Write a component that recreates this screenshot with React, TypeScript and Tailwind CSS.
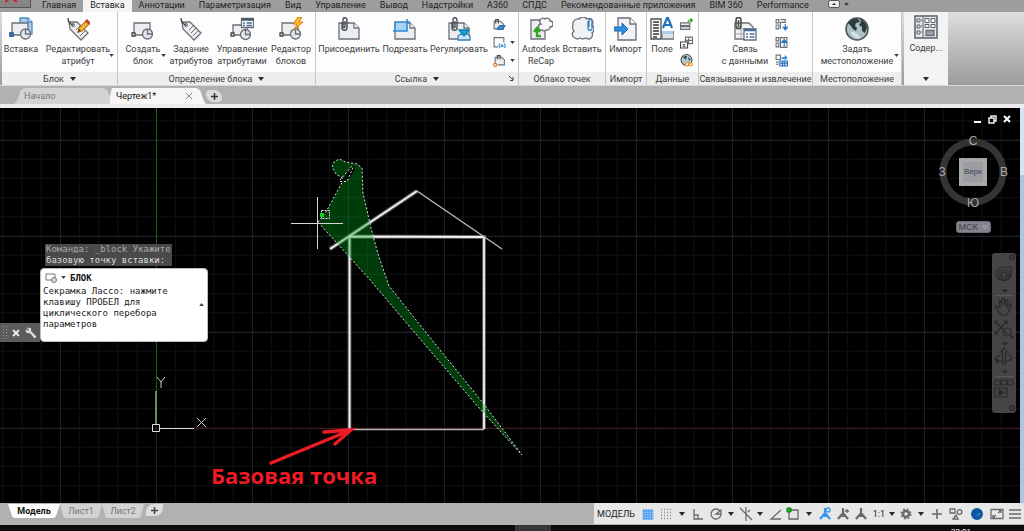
import React, { ReactNode } from 'react';

/* ---------- ribbon icons ---------- */

const Svg = ({ size = 24, children }: { size?: number; children: ReactNode }) => (
  <svg width={size} height={size} viewBox="0 0 24 24" fill="none" stroke="#6b7078" strokeWidth="1.3" aria-hidden="true">
    {children}
  </svg>
);

const BlockShape = () => (
  <>
    <path d="M3 6h16v12H3z" fill="#eceef1" />
    <circle cx="16.500" cy="17" r="5" fill="#e3e6ea" />
    <path d="M16.500 12v5h5" />
    <path d="M1 16h3v3H1z" fill="#fff" stroke="#444" />
  </>
);

const TagShape = () => (
  <>
    <path d="M3 5l8 0L22 16l-7 7L4 12z" fill="#eceef1" />
    <path d="M10 13l4-4M12 16l5-5M14 19l5-5" strokeWidth="1" />
    <circle cx="7" cy="8" r="1.300" fill="#fff" />
    <path d="M7 8C4 7 2 5 2 1" stroke="#444" />
  </>
);

const PageShape = () => (
  <>
    <path d="M2 6h15l5 5v11H2z" fill="#eceef1" />
    <path d="M17 6v5h5" fill="#fff" />
  </>
);

const ClipShape = () => (
  <path d="M5 5v6c0 3 5 3 5 0V3c0-3-4-3-4 0v7c0 1 2 1 2 0V4" stroke="#4b4f55" strokeWidth="1.400" />
);

const InsertIcon = () => (
  <Svg>
    <path d="M11 1h8l4 4v12H11z" fill="#a9cdf0" stroke="#4e8ac4" />
    <path d="M19 1v4h4" fill="#dcebf8" stroke="#4e8ac4" />
    <BlockShape />
    <path d="M1 16h3v3H1z" fill="#3b7cc4" stroke="#2b67a8" />
  </Svg>
);

const EditAttrIcon = () => (
  <Svg>
    <TagShape />
    <path d="M12 15l1-4 7-7 3 3-7 7z" fill="#f5b83d" stroke="#c97d16" />
    <path d="M20 4l3 3 1-1-3-3z" fill="#e8553a" stroke="#c9402a" />
    <path d="M12 15l1-3 2 2z" fill="#333" stroke="none" />
  </Svg>
);

const CreateBlockIcon = () => <Svg><BlockShape /></Svg>;
const TagIcon = () => <Svg><TagShape /></Svg>;

const ManageAttrIcon = () => (
  <Svg>
    <path d="M3 8h14v10H3z" fill="#eceef1" />
    <circle cx="15.500" cy="17.500" r="5" fill="#e3e6ea" />
    <path d="M15.500 12.500v5h5" />
    <path d="M1 16h3v3H1z" fill="#fff" stroke="#444" />
    <path d="M11.500 1.500h12v9h-12z" fill="#fff" />
    <path d="M11.500 2.500h12" stroke="#44566b" strokeWidth="2.500" />
    <path d="M13 6h2M13 8.500h2M16.500 6h5.500M16.500 8.500h5.500" stroke="#4a6c96" />
  </Svg>
);

const BlockEditorIcon = () => (
  <Svg>
    <BlockShape />
    <path d="M19 0l-5 7h4l-3 6 9-8h-4l3-5z" fill="#fbc02d" stroke="#e8731a" strokeWidth="1" />
  </Svg>
);

const AttachIcon = () => <Svg><PageShape /><ClipShape /></Svg>;

const ClipIcon = () => (
  <Svg>
    <PageShape />
    <path d="M2 5h12v9H2z" fill="#a9d3f3" stroke="none" />
    <path d="M0 14h14V2M2 14V5h15" stroke="#2e86d6" strokeWidth="1.500" />
  </Svg>
);

const AdjustIcon = () => (
  <Svg>
    <PageShape />
    <ClipShape />
    <path d="M11 19l3-2h6l3 2v4H11z" fill="#cfe3f5" stroke="#3d7fb8" />
    <path d="M12 13h10l-5 6z" fill="#11a7dd" stroke="#0a7fb0" />
  </Svg>
);

const RecapIcon = () => (
  <Svg>
    <path d="M2 3h14v19H2z" fill="#eceef1" />
    <path d="M13 13a3 3 0 0 1-1-6 3 3 0 0 1 4-5 3 3 0 0 1 5 2 3 3 0 0 1 0 6 3 3 0 0 1-4 3 3 3 0 0 1-4 0z" fill="#f6f7f8" />
    <path d="M12 19H8v-6M5 15l3-4 3 4" stroke="#35a51d" strokeWidth="2.400" />
  </Svg>
);

const CloudClipIcon = () => (
  <Svg>
    <path d="M5 21a4 4 0 0 1-1-7 6 6 0 0 1-1-6 5 5 0 0 1 6-6 5 5 0 0 1 8 0 4 4 0 0 1 5 6 5 5 0 0 1 0 8 4 4 0 0 1-6 5 6 6 0 0 1-6 0 4 4 0 0 1-5 0z" fill="#f1f2f4" />
    <path d="M18 4v7c0 3 4 3 4 0V4c0-3-3-3-3 0v6" stroke="#3d7fb8" />
  </Svg>
);

const ImportIcon = () => (
  <Svg>
    <path d="M4 1h12l6 6v16H4z" fill="#f1f2f4" />
    <path d="M16 1v6h6" fill="#fff" />
    <path d="M0 10h8V6l6 6-6 6v-4H0z" fill="#2f8fe0" stroke="#1c69b0" strokeWidth="1" />
  </Svg>
);

const FieldIcon = () => (
  <Svg>
    <path d="M1 2h10v20H1z" fill="#fff" stroke="#4b4f55" />
    <path d="M3 5h6M3 8h6M3 11h6M3 14h6M3 17h6M3 20h4" stroke="#333" strokeWidth="1.500" />
    <path d="M12 15h12v7H12z" fill="#dfe2e6" />
    <path d="M12 14h11v3H12z" fill="#a9cdf0" stroke="none" />
    <path d="M13 11l4-10h1l4 10M14.500 8h6" stroke="#2372bd" strokeWidth="2.200" />
  </Svg>
);

const LinkDataIcon = () => (
  <Svg>
    <path d="M2 6h14l4 4v12H2z" fill="#f1f2f4" />
    <path d="M2 12h16M2 17h16M8 8v14" stroke="#a5a9ae" strokeWidth="1" />
    <path d="M3 3a2.500 2.500 0 0 1 5 0v6a2.500 2.500 0 0 1-5 0zM5.500 3v7" stroke="#444" strokeWidth="1.500" />
    <path d="M11 12h12v11H11z" fill="#fff" />
    <path d="M11 13h12" stroke="#4a6c96" strokeWidth="2.500" />
    <path d="M13 17h2M13 20h2M16.500 17h5M16.500 20h5" stroke="#4a6c96" />
  </Svg>
);

const GlobeIcon = () => (
  <Svg>
    <circle cx="12" cy="12" r="11" fill="#a9c0c6" stroke="#4a5357" strokeWidth="1.500" />
    <path d="M3 6c3-4 7-5 10-4l2 3-4 1-1 3 2 2-1 3-3-2-3-4zM15 2c4 2 7 5 7 9l-2 5-3-2 0-4-3-2 2-3z" fill="#2f393c" stroke="none" />
    <path d="M6 15c3-1 8 2 9 6-4 1-8-1-9-6z" fill="#d4e2e4" stroke="none" />
  </Svg>
);

const ContentIcon = () => (
  <Svg>
    <path d="M1 1h22v22H1z" fill="#e7e8ea" stroke="#5b6066" strokeWidth="1.500" />
    <path d="M9 1v22M3 4h3v3H3zM3 10h3v3H3zM3 16h3v3H3zM7 5h1M7 11h1M7 17h1" stroke="#5b6066" strokeWidth="1" />
    <path d="M11 3.500h4v4h-4zM17 3.500h4v4h-4zM11 9.500h4v3h-4zM17 9.500h4v3h-4z" stroke="#5b6066" fill="#fff" strokeWidth="1" />
    <path d="M12 15.500h8v5h-8z" fill="#9aa0a8" />
  </Svg>
);

/* ---------- small ribbon icons ---------- */

const LayersPageIcon = () => (
  <Svg size={13}>
    <path d="M2 6h12l5 5v9H2z" fill="#eceef1" strokeWidth="2" />
    <path d="M5 10V3h5v7" stroke="#444" strokeWidth="2" />
    <path d="M8 19l5-5h9l-4 7h-9z" fill="#3d93dc" stroke="#2468a8" strokeWidth="2" />
  </Svg>
);
const FrameVarIcon = () => (
  <Svg size={13}>
    <path d="M9 20H2V3h18v9" strokeWidth="2" />
    <path d="M13 14q-3 4 0 8M21 14q3 4 0 8M15 16l4 4M19 16l-4 4" stroke="#2e86d6" strokeWidth="2" />
  </Svg>
);
const SnapPageIcon = () => (
  <Svg size={13}>
    <path d="M4 19V6h12l5 5v9H9" fill="#eceef1" strokeWidth="2" />
    <path d="M8 10V3h5v7" stroke="#444" strokeWidth="2" />
    <circle cx="4" cy="20" r="3" stroke="#e8731a" strokeWidth="2" />
  </Svg>
);
const UpdateFieldIcon = () => (
  <Svg size={13}>
    <path d="M1 9h17v5H1zM1 16h17v5H1z" fill="#eceef1" strokeWidth="2" />
    <path d="M15 8c0-4 3-5 7-4M19 1l4 3-4 4" stroke="#35a51d" strokeWidth="2.500" />
  </Svg>
);
const TableLinkIcon = () => (
  <Svg size={13}>
    <path d="M10 2h13v12H10zM10 8h13M16 2v12" strokeWidth="2" />
    <path d="M1 11h13v11H1zM5 16h5M5 19h5" fill="#fff" stroke="#444" strokeWidth="2" />
  </Svg>
);
const HyperlinkIcon = () => (
  <Svg size={13}>
    <circle cx="12" cy="11" r="10" fill="#b7c9cf" stroke="#4a5357" strokeWidth="2" />
    <path d="M5 5l8-2-2 8zM15 5l5 6-4 1z" fill="#37474f" stroke="none" />
    <path d="M10 19a3 3 0 0 1 6 0 3 3 0 0 1-6 0zM17 19a3 3 0 0 1 6 0 3 3 0 0 1-6 0z" fill="#fff" stroke="#e8911a" strokeWidth="2" />
  </Svg>
);
const DownloadIcon = () => (
  <Svg size={13}>
    <path d="M2 3h5v6H2zM2 13h5v7H2zM10 3h9v6M10 20V8h8" strokeWidth="2" />
    <path d="M19 11v9M15 17l4 5 4-5z" fill="#2e86d6" stroke="#2372bd" strokeWidth="2" />
  </Svg>
);
const UploadIcon = () => (
  <Svg size={13}>
    <path d="M2 3h5v6H2zM2 13h5v7H2zM10 3h12v18H10z" strokeWidth="2" />
    <path d="M17 20v-9M12 12l5-6 5 6z" fill="#2e86d6" stroke="#2372bd" strokeWidth="2" />
  </Svg>
);
const ExtractIcon = () => (
  <Svg size={13}>
    <path d="M2 2h8v8H2zM2 15h5M2 19h5" strokeWidth="2" />
    <path d="M12 6h6V2l5 5-5 5V9h-6z" fill="#2e86d6" stroke="none" />
    <path d="M9 13h14v9H9zM9 17h14M14 13v9M18 13v9" fill="#d6e8f8" stroke="#2372bd" strokeWidth="2" />
  </Svg>
);

const Caret = () => (
  <svg className="shrink-0" width="5" height="3" viewBox="0 0 6 4" fill="#3a3a3a" aria-hidden="true"><path d="M0 0h6L3 4z" /></svg>
);

const WideCaret = () => (
  <svg className="shrink-0" width="6" height="4" viewBox="0 0 6 4" fill="#2a2a2a" aria-hidden="true"><path d="M0 0h6L3 4z" /></svg>
);

/* ---------- ribbon ---------- */

type BigButtonProps = { icon: ReactNode; lines: string[]; width: string; arrow?: boolean };

const BigButton = ({ icon, lines, width, arrow }: BigButtonProps) => (
  <button type="button" className={`relative flex shrink-0 flex-col items-center whitespace-nowrap pt-[5px] ${width}`}>
    {icon}
    <span className="mt-0.5 leading-3">
      {lines.map((line) => <span key={line} className="block">{line}</span>)}
    </span>
    {arrow && <span className="absolute right-0.5 top-[42px] flex"><Caret /></span>}
  </button>
);

const SmallButton = ({ label, arrow, children }: { label: string; arrow?: boolean; children: ReactNode }) => (
  <button type="button" aria-label={label} className="flex items-center gap-1">
    {children}
    {arrow && <Caret />}
  </button>
);

const SmallColumn = ({ children }: { children: ReactNode }) => (
  <div className="flex flex-col gap-[5px] pt-1.5 pl-[3px]">{children}</div>
);

type PanelProps = { title: string; width: string; menu?: boolean; launcher?: boolean; children: ReactNode };

const Panel = ({ title, width, menu, launcher, children }: PanelProps) => (
  <section className={`flex shrink-0 flex-col border-r border-[#c6c6c6] bg-[#fdfdfd] ${width}`}>
    <div className="flex flex-1">{children}</div>
    <h2 className="relative flex h-[13px] items-center justify-center gap-1.5 whitespace-nowrap bg-[#eeeeee]">
      {title}
      {menu && <WideCaret />}
      {launcher && (
        <svg className="absolute right-1 top-1" width="5" height="5" viewBox="0 0 5 5" stroke="#444" fill="none" aria-hidden="true">
          <path d="M0 0l4 4M4 1v3.500H1" />
        </svg>
      )}
    </h2>
  </section>
);

const ribbonTabs = [
  'Главная', 'Вставка', 'Аннотации', 'Параметризация', 'Вид', 'Управление', 'Вывод',
  'Надстройки', 'A360', 'СПДС', 'Рекомендованные приложения', 'BIM 360', 'Performance',
];

const RibbonTabs = () => (
  <nav className="flex h-3 bg-[#9d9d9d] text-[#222]">
    <button type="button" aria-label="Меню приложения" className="mr-1 flex h-2 w-[31px] shrink-0 border-b border-r border-[#555] bg-[#858585]">
      <svg className="ml-[5px]" width="20" height="4" viewBox="0 0 20 4" stroke="#c8232c" strokeWidth="2" fill="none" aria-hidden="true">
        <path d="M0 2l3-2M9 0l3 2" />
      </svg>
    </button>
    {ribbonTabs.map((tab) => (
      <button
        key={tab}
        type="button"
        className={`h-3 shrink-0 whitespace-nowrap px-[7px] pb-px leading-[11px] ${tab === 'Вставка' ? 'bg-[#f4f4f4]' : ''}`}
      >
        {tab}
      </button>
    ))}
    <button type="button" aria-label="Свернуть ленту" className="ml-3 flex items-center gap-1 pb-1">
      <svg width="12" height="8" viewBox="0 0 12 8" aria-hidden="true">
        <rect x=".5" y=".5" width="11" height="7" rx="2" fill="#eee" stroke="#555" />
        <path d="M4 5h4L6 3z" fill="#222" />
      </svg>
      <Caret />
    </button>
  </nav>
);

const Ribbon = () => (
  <div className="flex h-[74px] overflow-hidden border-b border-[#d8d8d8] bg-linear-to-b from-[#dedede] to-[#9c9c9c] pl-0.5 text-[#404040]">
    <Panel title="Блок" width="w-[116px]" menu>
      <BigButton icon={<InsertIcon />} lines={['Вставка']} width="w-[38px]" />
      <BigButton icon={<EditAttrIcon />} lines={['Редактировать', 'атрибут']} width="w-[76px]" arrow />
    </Panel>
    <Panel title="Определение блока" width="w-[198px]" menu>
      <BigButton icon={<CreateBlockIcon />} lines={['Создать', 'блок']} width="w-[50px]" arrow />
      <BigButton icon={<TagIcon />} lines={['Задание', 'атрибутов']} width="w-[46px]" />
      <BigButton icon={<ManageAttrIcon />} lines={['Управление', 'атрибутами']} width="w-[56px]" />
      <BigButton icon={<BlockEditorIcon />} lines={['Редактор', 'блоков']} width="w-[42px]" />
    </Panel>
    <Panel title="Ссылка" width="w-[203px]" menu launcher>
      <BigButton icon={<AttachIcon />} lines={['Присоединить']} width="w-[66px]" />
      <BigButton icon={<ClipIcon />} lines={['Подрезать']} width="w-[46px]" />
      <BigButton icon={<AdjustIcon />} lines={['Регулировать']} width="w-[62px]" />
      <SmallColumn>
        <SmallButton label="Слои подложки"><LayersPageIcon /></SmallButton>
        <SmallButton label="Контуры" arrow><FrameVarIcon /></SmallButton>
        <SmallButton label="Привязка к подложкам" arrow><SnapPageIcon /></SmallButton>
      </SmallColumn>
    </Panel>
    <Panel title="Облако точек" width="w-[87px]">
      <BigButton icon={<RecapIcon />} lines={['Autodesk', 'ReCap']} width="w-[44px]" />
      <BigButton icon={<CloudClipIcon />} lines={['Вставить']} width="w-[38px]" />
    </Panel>
    <Panel title="Импорт" width="w-[41px]">
      <BigButton icon={<ImportIcon />} lines={['Импорт']} width="w-[39px]" />
    </Panel>
    <Panel title="Данные" width="w-[52px]">
      <BigButton icon={<FieldIcon />} lines={['Поле']} width="w-[30px]" />
      <SmallColumn>
        <SmallButton label="Обновить поля"><UpdateFieldIcon /></SmallButton>
        <SmallButton label="Объект OLE"><TableLinkIcon /></SmallButton>
        <SmallButton label="Гиперссылка"><HyperlinkIcon /></SmallButton>
      </SmallColumn>
    </Panel>
    <Panel title="Связывание и извлечение" width="w-[114px]">
      <BigButton icon={<LinkDataIcon />} lines={['Связь', 'с данными']} width="w-[54px] ml-[19px]" />
      <SmallColumn>
        <SmallButton label="Загрузить из источника"><DownloadIcon /></SmallButton>
        <SmallButton label="Выгрузить в источник"><UploadIcon /></SmallButton>
        <SmallButton label="Извлечение данных"><ExtractIcon /></SmallButton>
      </SmallColumn>
    </Panel>
    <Panel title="Местоположение" width="w-[89px]">
      <BigButton icon={<GlobeIcon />} lines={['Задать', 'местоположение']} width="w-[88px]" arrow />
    </Panel>
    <button type="button" className="ml-0.5 flex w-[44px] shrink-0 flex-col items-center bg-[#f3f3f3] pt-[3px]">
      <ContentIcon />
      <span className="leading-[18px]">Содер...</span>
      <span className="mt-auto mb-1 flex"><WideCaret /></span>
    </button>
  </div>
);

const DocumentTabs = () => (
  <div className="flex h-[22px] items-end border-b-4 border-[#ededed] bg-[#b1b1b1] pl-3.5">
    <button type="button" className="h-4 w-24 bg-[#d3d3d3] pl-2.5 text-left text-[#777] [clip-path:polygon(0_100%,3%_80%,7%_15%,11%_0,93%_0,97%_12%,100%_50%,100%_100%)]">
      Начало
    </button>
    <button type="button" className="flex h-4 w-[96px] items-center bg-[#f6f6f6] pl-1.5 text-left text-[#111] [clip-path:polygon(0_50%,2%_0,90%_0,94%_15%,98%_85%,100%_100%,0_100%)]">
      Чертеж1*
      <svg className="ml-auto mr-3.5" width="6" height="6" viewBox="0 0 6 6" stroke="#888" aria-hidden="true"><path d="M0 0l6 6M6 0L0 6" /></svg>
    </button>
    <button type="button" aria-label="Новый чертеж" className="mb-0.5 flex h-3 w-4 items-center justify-center rounded-tr-lg rounded-bl-lg rounded-tl-sm rounded-br-sm bg-[#dcdcdc]">
      <svg width="7" height="7" viewBox="0 0 7 7" stroke="#333" strokeWidth="1.500" aria-hidden="true"><path d="M3.500 0v7M0 3.500h7" /></svg>
    </button>
  </div>
);

/* ---------- drawing area ---------- */

const lasso = 'M318 222L326 212L344 179L336 174L332 167L334 162L339 159L346 162L357 164L362 168L363 193L371 228L378 254L389 286L432 340L483 403L522 455L480 409L403 319L371 281Z';

const Drawing = () => (
  <svg className="absolute inset-0 h-full w-full" role="img" aria-label="Чертеж домика">
    <defs>
      <pattern id="minor" x="156" y="319.500" width="19.200" height="19.200" patternUnits="userSpaceOnUse">
        <path d="M.5 0v19.200M0 .5h19.200" stroke="#0f1114" fill="none" />
      </pattern>
      <pattern id="major" x="156" y="320" width="96" height="96" patternUnits="userSpaceOnUse">
        <path d="M.5 0v96M0 .5h96" stroke="#1c1e29" fill="none" />
      </pattern>
    </defs>
    <rect width="100%" height="100%" fill="url(#minor)" />
    <rect width="100%" height="100%" fill="url(#major)" />
    <path d="M156.500 0v284" stroke="#1a5e1d" />
    <path d="M194 320.500H1020" stroke="#4a1618" />

    {/* model coordinates start at the top of the window */}
    <g transform="translate(0 -108)" fill="none">
      <g stroke="#555" strokeWidth="4">
        <path d="M349.500 429V236.500L484 237V429M330 249l87-58" />
      </g>
      <g stroke="#f4f4f4" strokeWidth="1.800">
        <path d="M349.500 429V236.500L484 237V429M330 249l87-58" />
      </g>
      <path d="M417 191l85 58M349 429.500h135" stroke="#b5b5b5" strokeWidth="1.500" />
      <path d={lasso} fill="#00a51c" fillOpacity=".36" stroke="#ddd" strokeDasharray="2 2" />
      <path d="M342 181l5 0 6-8 2-7-4 1z" fill="#000" />
      <path d="M340 180l12-14M340 181.500h7l6-14" stroke="#ddd" strokeDasharray="2 2" />
      <path d="M317.500 197v52M291 223.500h52" stroke="#d6d6d6" />
      <path d="M321.500 210.500h8v8h-8z" stroke="#ddd" strokeDasharray="2 1" />
      <path d="M320 213h4v4h-4z" fill="#00d618" />

      {/* UCS icon */}
      <path d="M156 391v34" stroke="#86b986" strokeWidth="1.500" />
      <path d="M160 428.500h34M152.500 424.500h7v7h-7z" stroke="#ddd" />
      <path d="M157 377l4 5 4-5M161 382v6M197 418l9 9M206 418l-9 9" stroke="#ccc" />

      <g stroke="#ed1c24" strokeWidth="3.500" strokeLinecap="round">
        <path d="M271 463l80-33M324 432l27-2-16 14" />
      </g>
    </g>
  </svg>
);

const WindowControls = () => (
  <div className="absolute right-2 top-[7px] flex gap-1.5 text-white">
    <button type="button" aria-label="Свернуть"><svg width="9" height="9" viewBox="0 0 9 9" fill="#fff"><path d="M1 6h7v2H1z" /></svg></button>
    <button type="button" aria-label="Развернуть"><svg width="9" height="9" viewBox="0 0 9 9" fill="none" stroke="#eee" strokeWidth="1.500"><path d="M1 3h5v5H1zM3 3V1h5v5H6" /></svg></button>
    <button type="button" aria-label="Закрыть"><svg width="9" height="9" viewBox="0 0 9 9" stroke="#fff" strokeWidth="2"><path d="M1 1l6 6M7 1L1 7" /></svg></button>
  </div>
);

const ViewCube = () => (
  <div className="absolute right-[9px] top-[25px] flex w-[76px] flex-col items-center font-['Liberation_Sans',sans-serif] text-[#aaa]">
    <div className="relative h-[78px] w-full">
      <svg className="absolute inset-0" width="76" height="78" viewBox="0 0 76 78" fill="none" aria-hidden="true">
        <circle cx="38" cy="39" r="30" stroke="#343434" strokeWidth="7" />
      </svg>
      <div className="relative grid h-full grid-cols-[14px_1fr_14px] grid-rows-[16px_1fr_16px] place-items-center text-[12px] leading-none">
        <span className="col-start-2">С</span>
        <span className="col-start-1 row-start-2">З</span>
        <button type="button" className="col-start-2 row-start-2 h-7 w-7 border-4 border-[#a8a8a8] bg-[#9a9da1] text-[8px] text-[#3c4250]">
          Верх
        </button>
        <span className="col-start-3 row-start-2">В</span>
        <span className="col-start-2 row-start-3">Ю</span>
      </div>
    </div>
    <button type="button" className="mt-2.5 flex h-3 w-[35px] items-center justify-between rounded-[3px] border border-[#6c6c78] bg-[#84848f] px-0.5 text-[9px] leading-none text-[#3e3e48]">
      МСК
      <svg width="6" height="4" viewBox="0 0 6 4" fill="none" stroke="#aaa"><path d="M0 0h6L3 4z" /></svg>
    </button>
  </div>
);

const NavigationBar = () => (
  <div className="absolute right-1 top-[145px] w-6 rounded-[3px] bg-[#454545]">
    <svg width="24" height="160" viewBox="0 0 24 160" fill="none" stroke="#2a2a2a" strokeWidth="1.200" role="img" aria-label="Панель навигации">
      <circle cx="20" cy="4" r="2.500" /><path d="M19 4h2" />
      <path d="M4 22a8 8 0 0 1 8-8h7v8a8 8 0 0 1-15 0z" /><circle cx="12" cy="22" r="5.500" /><circle cx="12" cy="22" r="3" />
      <path d="M11 37h4l-2 2z" fill="#2a2a2a" />
      <path d="M3 42.500h18M3 123.500h18" stroke="#585858" />
      <path d="M8 60l-5-6c0-2 2-2 3 0l2 1-1-7c1-1 2 0 3 5V46c1-1 2-1 2 0l1 7 1-6c1-1 2 0 2 1l-1 7 3-4c1-1 2 0 1 2l-3 7c-1 3-5 4-8 0z" />
      <path d="M3 68l12 13M15 68L3 81M3 71v-3h3M12 68h3v3M3 78v3h3" /><circle cx="15" cy="79" r="4" /><path d="M18 82l3 3" strokeWidth="2" />
      <path d="M11 90h4l-2 2zM11 118h4l-2 2z" fill="#2a2a2a" />
      <path d="M10.500 111v-12H9l3-4 3 4h-1.500v12zM9 102c-7 2-7 5-3 6 5 1 13 0 14-3 0-2-3-3-5-3M4 105l3 3-4 2" />
      <path d="M3 127h5v5H3zM9.500 127h5v5h-5zM16 127h5v5h-5zM3 135h12v9H3z" /><path d="M7 137v5l5-2.500z" fill="#2a2a2a" />
      <circle cx="20" cy="155" r="2.500" /><path d="M19 155h2" />
    </svg>
  </div>
);

const CommandLine = () => (
  <div className="absolute left-0 top-[136px] font-['DejaVu_Sans_Mono',monospace] text-[9px]">
    <p className="ml-[45px] w-[127px] whitespace-nowrap bg-[#4a4a4a] px-px leading-[11px] text-[#ddd]">
      <span className="text-[#a8a8a8]">Команда: _block Укажите</span><br />
      базовую точку вставки:
    </p>
    <div className="mt-0.5 flex items-end">
      <div className="flex h-[19px] w-10 items-center justify-around bg-[#5c5c5c]">
        <svg width="4" height="14" viewBox="0 0 4 14" fill="#999" aria-hidden="true">
          <path d="M0 0h1v1H0zM3 0h1v1H3zM0 3h1v1H0zM3 3h1v1H3zM0 6h1v1H0zM3 6h1v1H3zM0 9h1v1H0zM3 9h1v1H3zM0 12h1v1H0zM3 12h1v1H3z" />
        </svg>
        <button type="button" aria-label="Закрыть"><svg width="8" height="8" viewBox="0 0 8 8" stroke="#eee" strokeWidth="1.800"><path d="M1 1l6 6M7 1L1 7" /></svg></button>
        <button type="button" aria-label="Настройка">
          <svg width="12" height="12" viewBox="0 0 12 12" fill="#ddd"><path d="M1 2l2 2 1-1-2-2c3-1 5 0 4 3l5 5c1 1-1 3-2 2L5 6C2 7 0 5 1 2z" /></svg>
        </button>
      </div>
      <div className="relative min-h-[74px] w-[168px] rounded-sm border border-[#bbb] bg-white px-0.5 pt-0.5 text-[#222]">
        <div className="flex h-[13px] items-center gap-1 pl-0.5">
          <svg width="12" height="10" viewBox="0 0 12 10" fill="none" stroke="#777" aria-hidden="true"><path d="M1 1h9v6H1z" /><circle cx="9" cy="7" r="2.500" fill="#ddd" /></svg>
          <Caret />
          <b className="text-[#111]">БЛОК</b>
        </div>
        <p className="mt-0.5 w-32 leading-[11px]">Секрамка Лассо: нажмите клавишу ПРОБЕЛ для циклического перебора параметров</p>
        <button type="button" aria-label="История команд" className="absolute right-[3px] top-[34px] flex rotate-180"><Caret /></button>
      </div>
    </div>
  </div>
);

/* ---------- status bar ---------- */

const StatusSvg = ({ children, color = '#6a6a6a' }: { children: ReactNode; color?: string }) => (
  <svg width="14" height="14" viewBox="0 0 14 14" fill="none" stroke={color} strokeWidth="1.300" aria-hidden="true">{children}</svg>
);

const person = <path d="M7 3v4M7 6l-5 6M7 6l5 6M4 9h6M7 1v3" strokeWidth="2.200" />;

const statusItems: { label: string; width: string; icon: ReactNode }[] = [
  { label: 'Сетка', width: 'w-[19px]', icon: <StatusSvg color="#4b9ef0"><path d="M3 2v11M5.500 2v11M8 2v11M10.500 2v11M1.500 4h11M1.500 6.500h11M1.500 9h11M1.500 11.500h11" /></StatusSvg> },
  { label: 'Шаговая привязка', width: 'w-[18px]', icon: <StatusSvg color="#8a8a8a"><path d="M2 2.500h11M2 5.500h11M2 8.500h11M2 11.500h11" strokeDasharray="1 2" /></StatusSvg> },
  { label: 'Параметры привязки', width: 'w-[13px]', icon: <WideCaret /> },
  { label: 'Орто', width: 'w-5', icon: <StatusSvg><path d="M3 2v10h9M3 8h4v4" /></StatusSvg> },
  { label: 'Полярное отслеживание', width: 'w-4', icon: <StatusSvg><path d="M11 4a5 5 0 1 0 1 3H7l5-4v4" /></StatusSvg> },
  { label: 'Углы', width: 'w-3.5', icon: <WideCaret /> },
  { label: 'Изометрия', width: 'w-[15px]', icon: <StatusSvg><path d="M1 1l12 12M7 0v14M11 3l-2 2" /></StatusSvg> },
  { label: 'Плоскости', width: 'w-3.5', icon: <WideCaret /> },
  { label: 'Объектное отслеживание', width: 'w-[17px]', icon: <StatusSvg><path d="M12 3l-10 9h10" /></StatusSvg> },
  { label: 'Объектная привязка', width: 'w-[18px]', icon: <StatusSvg><path d="M3 3h9v9H3z" /><path d="M1 1h4v4H1z" fill="#16b51e" stroke="#0b7d12" strokeWidth="1" /></StatusSvg> },
  { label: 'Режимы привязки', width: 'w-[13px]', icon: <WideCaret /> },
  { label: 'Видимость аннотаций', width: 'w-[19px]', icon: <StatusSvg color="#3a97f0">{person}<circle cx="10" cy="3" r="2" /></StatusSvg> },
  { label: 'Автомасштаб', width: 'w-[18px]', icon: <StatusSvg>{person}<path d="M9 4h4M11 2v4" /></StatusSvg> },
  { label: 'Аннотации', width: 'w-[18px]', icon: <StatusSvg>{person}</StatusSvg> },
  { label: 'Масштаб', width: 'w-7', icon: <span className="flex items-center gap-1 text-[#222]">1:1<WideCaret /></span> },
  { label: 'Рабочее пространство', width: 'w-4', icon: <StatusSvg><circle cx="7" cy="7" r="3" strokeWidth="2.500" /><circle cx="7" cy="7" r="4.800" strokeDasharray="1.900 1.900" strokeWidth="1.500" /></StatusSvg> },
  { label: 'Выбор пространства', width: 'w-3.5', icon: <WideCaret /> },
  { label: 'Монитор аннотаций', width: 'w-[17px]', icon: <StatusSvg><path d="M7 2v10M2 7h10" strokeWidth="1.600" /></StatusSvg> },
  { label: 'Изоляция объектов', width: 'w-[22px]', icon: <StatusSvg><path d="M1 2h5v4H1zM7 8l2 4H4z" /><circle cx="10.500" cy="5" r="2.300" /></StatusSvg> },
  { label: 'Аппаратное ускорение', width: 'w-5', icon: <StatusSvg color="#0b57a0"><circle cx="7" cy="7" r="5.300" fill="#0b57a0" /><path d="M7 9l3-3" stroke="#3f8bd0" /></StatusSvg> },
  { label: 'Очистить экран', width: 'w-[19px]', icon: <StatusSvg><path d="M1 2.500h12v9H1zM8 6l3-2M9 4h2v2M6 8l-3 2M3 8v2h2" /></StatusSvg> },
  { label: 'Адаптация', width: 'w-[18px]', icon: <StatusSvg><path d="M1 3h12M1 7h12M1 11h12" strokeWidth="1.600" /></StatusSvg> },
];

const StatusBar = () => (
  <footer className="flex h-[22px] items-start bg-[#b1b1b1] pl-2">
    <div className="flex pt-px">
      <button type="button" className="h-3.5 w-[52px] bg-white font-bold leading-3 text-[#111] [clip-path:polygon(0_0,100%_0,92%_90%,88%_100%,12%_100%,8%_90%)]">Модель</button>
      <button type="button" className="h-3.5 w-[42px] bg-[#d3d3d3] leading-3 text-[#777] [clip-path:polygon(0_0,100%_0,92%_90%,88%_100%,12%_100%,8%_90%)]">Лист1</button>
      <button type="button" className="h-3.5 w-[42px] bg-[#d3d3d3] leading-3 text-[#777] [clip-path:polygon(0_0,100%_0,92%_90%,88%_100%,12%_100%,8%_90%)]">Лист2</button>
      <button type="button" aria-label="Новый лист" className="ml-0.5 flex h-3 w-[17px] items-center justify-center rounded-tl-lg rounded-br-lg bg-[#dedede]">
        <svg width="7" height="7" viewBox="0 0 7 7" stroke="#444" strokeWidth="1.500" aria-hidden="true"><path d="M3.500 0v7M0 3.500h7" /></svg>
      </button>
    </div>
    <div className="ml-auto flex h-[21px] items-center bg-[#e7e7e7]">
      <button type="button" className="w-11 text-[#222]">МОДЕЛЬ</button>
      {statusItems.map(({ label, width, icon }) => (
        <button key={label} type="button" aria-label={label} title={label} className={`flex h-full items-center justify-center ${width}`}>
          {icon}
        </button>
      ))}
    </div>
  </footer>
);

export default function App() {
  return (
    <div className="flex h-screen flex-col overflow-hidden bg-[#0b0b0b] font-['Roboto','Open_Sans',sans-serif] text-[9px] leading-3">
      <header>
        <RibbonTabs />
        <Ribbon />
        <DocumentTabs />
      </header>
      <main className="flex min-h-0 flex-1 bg-linear-to-b from-[#d5e4f5] from-17% to-[#adc4e0] to-17%">
        <div className="relative mr-1 flex-1 overflow-hidden bg-black">
          <Drawing />
          <p className="absolute left-[211px] top-[353px] whitespace-nowrap font-['Open_Sans',sans-serif] text-[22px] font-bold leading-7 text-[#ed1c24]">Базовая точка</p>
          <CommandLine />
          <WindowControls />
          <ViewCube />
          <NavigationBar />
        </div>
      </main>
      <StatusBar />
      <div className="flex h-1.5 items-start justify-end overflow-hidden bg-[#0b0b0b] pr-[53px] text-white">
        <div className="mr-auto ml-[515px] h-full w-9 bg-[#34373a]" />
        <time className="pt-[3px] text-[8px] leading-none">22:01</time>
      </div>
    </div>
  );
}
